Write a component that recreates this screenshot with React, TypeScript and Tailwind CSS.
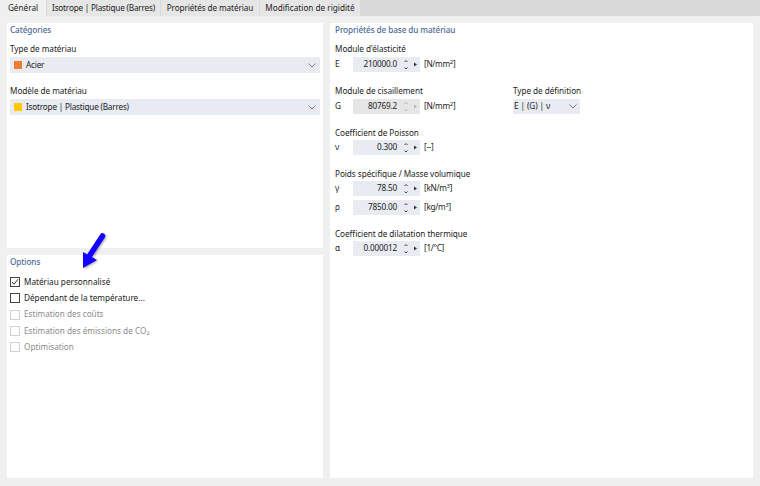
const sans = "font-['Noto_Sans','Open_Sans',sans-serif]";

const tabs = [
  { label: 'Général', cls: 'w-[46px] bg-[#f0f0f0]' },
  { label: 'Isotrope | Plastique (Barres)', cls: 'w-[113px] bg-[#e6e6e6] tracking-[-0.2px]' },
  { label: 'Propriétés de matériau', cls: 'w-[98px] bg-[#e6e6e6] tracking-[-0.1px]' },
  { label: 'Modification de rigidité', cls: 'w-[100px] bg-[#e6e6e6]' },
];

const Spin = ({ disabled }: { disabled?: boolean }) => (
  <svg width="23" height="15" viewBox="0 0 23 15" className="shrink-0">
    <g fill="none" stroke={disabled ? '#b4b4b4' : '#444'} strokeWidth="1">
      <path d="M7.5 5 L9 3.5 L10.5 5" />
      <path d="M7.5 10.5 L9 12 L10.5 10.5" />
    </g>
    <path d="M17 5.5 L20 7.5 L17 9.5 Z" fill={disabled ? '#b4b4b4' : '#333'} />
  </svg>
);

const Chevron = () => (
  <svg width="8" height="5" viewBox="0 0 8 5">
    <path d="M0.5 0.5 L4 4 L7.5 0.5" fill="none" stroke="#777" strokeWidth="1" />
  </svg>
);

const Unit = ({ children }: { children: React.ReactNode }) => (
  <span className="ml-[4px] text-[8.2px] tracking-[-0.3px] text-[#222]">{children}</span>
);

const Field = ({ sym, value, unit, disabled }: { sym: string; value: string; unit: React.ReactNode; disabled?: boolean }) => (
  <div className="flex items-center h-[15px]">
    <span className="w-[18px] text-[8.2px] text-[#222]">{sym}</span>
    <div className={`flex items-center justify-end w-[67px] h-[15px] ${disabled ? 'bg-[#e6e6e6]' : 'bg-[#e9ebf3]'}`}>
      <span className="text-[8.2px] tracking-[-0.2px] text-[#222]">{value}</span>
      <Spin disabled={disabled} />
    </div>
    <Unit>{unit}</Unit>
  </div>
);

const Select = ({ color, label }: { color: string; label: string }) => (
  <div className="flex items-center justify-between h-[16px] bg-[#e9ebf3] pl-1 pr-[4px]">
    <div className="flex items-center gap-[4px]">
      <span className="w-[8px] h-[8px]" style={{ background: color }} />
      <span className="text-[8.2px] tracking-[-0.2px] text-[#222]">{label}</span>
    </div>
    <Chevron />
  </div>
);

const Check = ({ label, checked, disabled }: { label: React.ReactNode; checked?: boolean; disabled?: boolean }) => (
  <div className="flex items-center h-[16.25px] gap-[4px]">
    <span className={`relative w-[10px] h-[10px] border bg-white ${disabled ? 'border-[#d0d0d0]' : 'border-[#444]'}`}>
      {checked && (
        <svg width="8" height="8" viewBox="0 0 8 8" className="absolute inset-0">
          <path d="M1 4 L3 6.2 L7 1.2" fill="none" stroke="#333" strokeWidth="1" />
        </svg>
      )}
    </span>
    <span className={`text-[8.2px] ${disabled ? 'text-[#8c8c8c]' : 'text-[#222]'}`}>{label}</span>
  </div>
);

const Title = ({ children }: { children: React.ReactNode }) => (
  <div className="text-[8.2px] font-medium tracking-[-0.1px] leading-[14px] text-[#4f6b94]">{children}</div>
);

const Label = ({ children }: { children: React.ReactNode }) => (
  <div className="text-[8.2px] tracking-[-0.05px] leading-[12px] whitespace-nowrap text-[#222]">{children}</div>
);

const App = () => {
  return (
    <div className={`relative w-[760px] h-[486px] overflow-hidden bg-[#f0f0f0] ${sans}`}>
      <div className="flex h-[16px] bg-[#d9d9d9] gap-px">
        {tabs.map((t) => (
          <div key={t.label} className={`flex items-center justify-center whitespace-nowrap text-[8.2px] text-[#222] ${t.cls}`}>
            {t.label}
          </div>
        ))}
      </div>

      <div className="flex gap-[7px] px-[7px] pt-[7px]">
        <div className="flex flex-col gap-[7px] w-[316px]">
          <div className="h-[225px] bg-white px-[3px]">
            <Title>Catégories</Title>
            <div className="mt-[6px]"><Label>Type de matériau</Label></div>
            <div className="mt-[2px]"><Select color="#ed7d31" label="Acier" /></div>
            <div className="mt-[12px]"><Label>Modèle de matériau</Label></div>
            <div className="mt-[2px]"><Select color="#ffc800" label="Isotrope | Plastique (Barres)" /></div>
          </div>
          <div className="h-[223px] bg-white px-[3px]">
            <Title>Options</Title>
            <div className="mt-[5px] flex flex-col">
              <Check checked label="Matériau personnalisé" />
              <Check label="Dépendant de la température..." />
              <Check disabled label="Estimation des coûts" />
              <Check disabled label={<span>Estimation des émissions de CO<sub className="text-[6px]">2</sub></span>} />
              <Check disabled label="Optimisation" />
            </div>
          </div>
        </div>

        <div className="w-[423px] h-[455px] bg-white pl-[5px]">
          <Title>Propriétés de base du matériau</Title>
          <div className="mt-[6px]"><Label>Module d'élasticité</Label></div>
          <div className="mt-[2px]"><Field sym="E" value="210000.0" unit={<>[N/mm<sup className="text-[6px]">2</sup>]</>} /></div>
          <div className="mt-[13px] flex">
            <div className="w-[178px]">
              <Label>Module de cisaillement</Label>
              <div className="mt-[2px]"><Field disabled sym="G" value="80769.2" unit={<>[N/mm<sup className="text-[6px]">2</sup>]</>} /></div>
            </div>
            <div className="w-[67px]">
              <Label>Type de définition</Label>
              <div className="mt-[2px] flex items-center justify-between h-[15px] bg-[#e9ebf3] pl-[1px] pr-[3px]">
                <span className="text-[8.2px] tracking-[-0.1px] text-[#222]">E | (G) | ν</span>
                <Chevron />
              </div>
            </div>
          </div>
          <div className="mt-[13px]"><Label>Coefficient de Poisson</Label></div>
          <div className="mt-[1px]"><Field sym="ν" value="0.300" unit="[--]" /></div>
          <div className="mt-[13px]"><Label>Poids spécifique / Masse volumique</Label></div>
          <div className="mt-[1px]"><Field sym="γ" value="78.50" unit={<>[kN/m<sup className="text-[6px]">3</sup>]</>} /></div>
          <div className="mt-[4px]"><Field sym="ρ" value="7850.00" unit={<>[kg/m<sup className="text-[6px]">3</sup>]</>} /></div>
          <div className="mt-[13px]"><Label>Coefficient de dilatation thermique</Label></div>
          <div className="mt-[1px]"><Field sym="α" value="0.000012" unit="[1/°C]" /></div>
        </div>
      </div>

      <svg width="40" height="50" viewBox="0 0 40 50" className="absolute left-[75px] top-[228px] drop-shadow-[1px_1px_1px_rgba(0,0,0,0.35)]">
        <path d="M27.5 8 L15 27" stroke="#1400ff" strokeWidth="5.5" strokeLinecap="round" fill="none" />
        <path d="M8 24 L8 40 L22 32 Z" fill="#1400ff" />
      </svg>
    </div>
  );
};

export default App;
